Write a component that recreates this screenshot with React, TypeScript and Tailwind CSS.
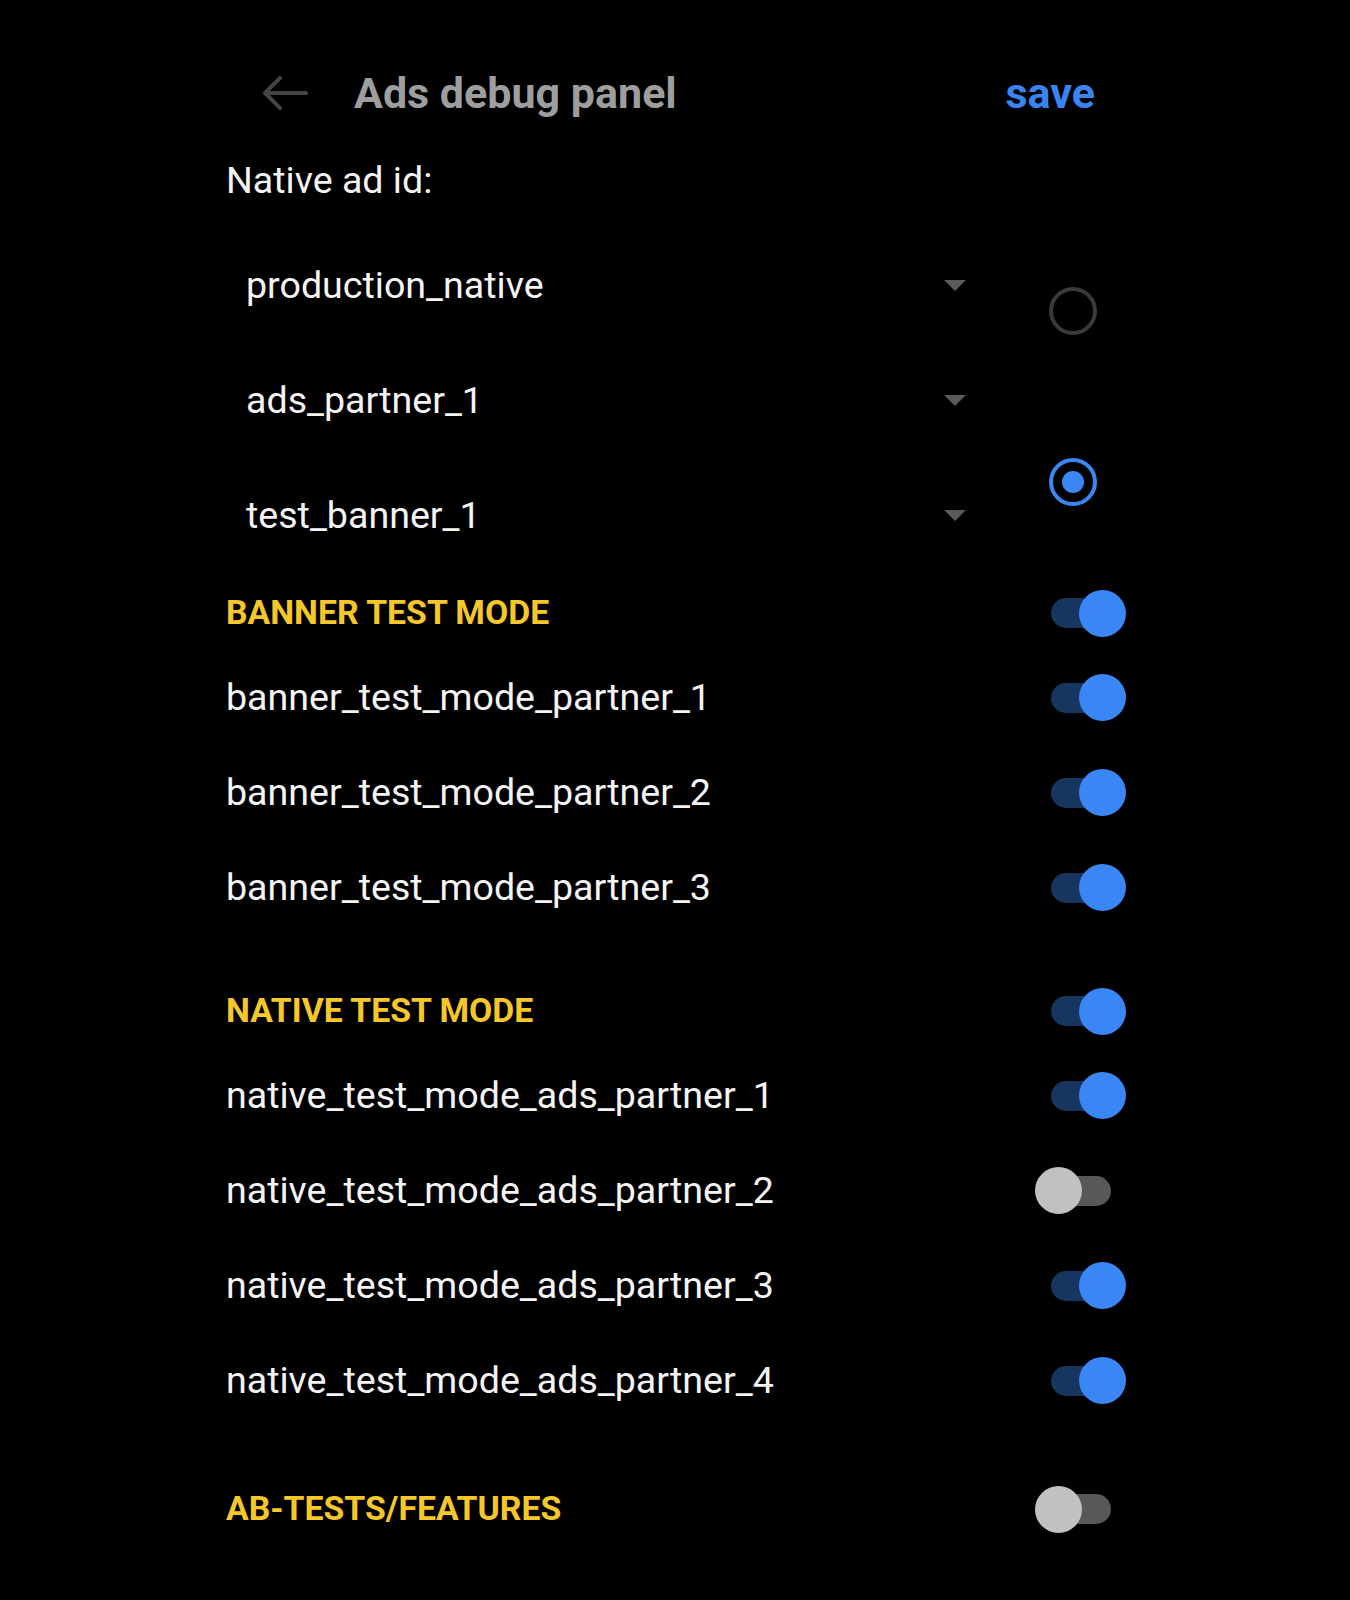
import React from "react";

const font = { fontFamily: "Roboto, 'Noto Sans', sans-serif" };

function Toggle({ on }: { on: boolean }) {
  return (
    <div className="relative mr-[13px] h-[30px] w-[60px]">
      <div className={`h-full w-full rounded-full ${on ? "bg-[#163660]" : "bg-[#585858]"}`} />
      <div
        className={`absolute top-[-8.5px] h-[47px] w-[47px] rounded-full ${
          on ? "left-[28px] bg-[#3b86f5]" : "left-[-16px] bg-[#c1c1c1]"
        }`}
      />
    </div>
  );
}

function SectionHeader({ title, on }: { title: string; on: boolean }) {
  return (
    <div className="flex h-[74px] items-center justify-between">
      <span className="text-[33.8px] font-bold text-[#f6c729]">{title}</span>
      <Toggle on={on} />
    </div>
  );
}

function Row({ label, on }: { label: string; on: boolean }) {
  return (
    <div className="flex h-[95px] items-center justify-between">
      <span className="text-[37.6px] text-[#f4f4f4]">{label}</span>
      <Toggle on={on} />
    </div>
  );
}

function Spinner({ label }: { label: string }) {
  return (
    <div className="flex h-[115px] items-center justify-between pl-[20px] pr-[5px]">
      <span className="text-[37.6px] text-[#f4f4f4]">{label}</span>
      <svg width="22" height="11" viewBox="0 0 22 11">
        <path d="M0 0 L22 0 L11 11 Z" fill="#5a5a5a" />
      </svg>
    </div>
  );
}

export default function App() {
  return (
    <div className="min-h-[1600px] w-full bg-black" style={font}>
      <div className="mx-auto w-[898px] pt-[53px]">
        <div className="flex h-[80px] items-center justify-between">
          <div className="flex items-center">
            <svg width="46" height="34" viewBox="0 0 46 34" className="ml-[36px]">
              <path
                d="M44 17 H3 M18 2 L3 17 L18 32"
                stroke="#444444"
                strokeWidth="4"
                fill="none"
                strokeLinecap="round"
                strokeLinejoin="round"
              />
            </svg>
            <span className="ml-[46px] text-[43px] font-bold text-[#9e9e9e]">Ads debug panel</span>
          </div>
          <span className="mr-[29px] text-[43px] font-bold text-[#3a84f2]">save</span>
        </div>

        <div className="flex h-[95px] items-center">
          <span className="text-[37.6px] text-[#f4f4f4]">Native ad id:</span>
        </div>

        <div className="flex">
          <div className="w-[745px]">
            <Spinner label="production_native" />
            <Spinner label="ads_partner_1" />
            <Spinner label="test_banner_1" />
          </div>
          <div className="ml-[78px] flex flex-col pt-[59px]">
            <div className="h-[48px] w-[48px] rounded-full border-[4px] border-[#3a3a3a]" />
            <div className="mt-[123px] flex h-[48px] w-[48px] items-center justify-center rounded-full border-[4px] border-[#3b86f5]">
              <div className="h-[22px] w-[22px] rounded-full bg-[#3b86f5]" />
            </div>
          </div>
        </div>

        <div className="mt-[3px]">
          <SectionHeader title="BANNER TEST MODE" on />
          <Row label="banner_test_mode_partner_1" on />
          <Row label="banner_test_mode_partner_2" on />
          <Row label="banner_test_mode_partner_3" on />
        </div>

        <div className="mt-[39px]">
          <SectionHeader title="NATIVE TEST MODE" on />
          <Row label="native_test_mode_ads_partner_1" on />
          <Row label="native_test_mode_ads_partner_2" on={false} />
          <Row label="native_test_mode_ads_partner_3" on />
          <Row label="native_test_mode_ads_partner_4" on />
        </div>

        <div className="mt-[44px]">
          <SectionHeader title="AB-TESTS/FEATURES" on={false} />
        </div>
      </div>
    </div>
  );
}
